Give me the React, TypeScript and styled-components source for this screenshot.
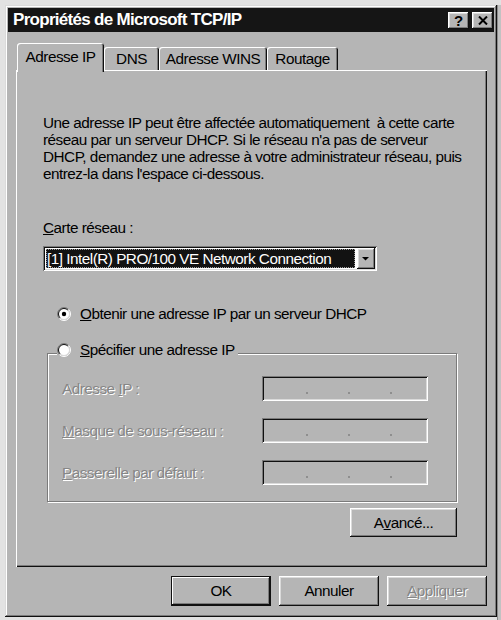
import React from 'react';
import styled, { createGlobalStyle, css } from 'styled-components';

const FACE = '#b5b5b5';
const SHADOW = '#7b7b7b';
const DARK = '#101010';
const LIGHT = '#ffffff';
const HILITE = '#dadada';
const FONT = `"Liberation Sans", Arial, sans-serif`;

const Global = createGlobalStyle`
  html, body { margin: 0; padding: 0; }
  body { background: #e2e2e2; font-family: ${FONT}; }
  * { box-sizing: border-box; }
`;

const uiFont = css`
  font-size: 15.3px;
  letter-spacing: -0.5px;
`;

const raised = css`
  box-shadow: inset -1px -1px 0 ${DARK}, inset 1px 1px 0 ${LIGHT},
    inset -2px -2px 0 ${SHADOW}, inset 2px 2px 0 ${HILITE};
`;

const sunken = css`
  box-shadow: inset 1px 1px 0 ${SHADOW}, inset -1px -1px 0 ${LIGHT},
    inset 2px 2px 0 ${DARK}, inset -2px -2px 0 ${HILITE};
`;

const Page = styled.div`
  width: 501px;
  height: 620px;
  display: flex;
  padding: 5px 0 0 5px;
  overflow: hidden;
`;

const Window = styled.div`
  width: 492px;
  height: 612px;
  flex: none;
  background: ${FACE};
  padding: 3px;
  display: flex;
  flex-direction: column;
  box-shadow: inset -1px -1px 0 ${DARK}, inset 1px 1px 0 ${HILITE},
    inset -2px -2px 0 ${SHADOW}, inset 2px 2px 0 ${LIGHT};
`;

const Backdrop = styled.div`
  flex: 1;
  background: #c2c2c2;
  border-left: 1px solid #8a8a8a;
`;

const TitleBar = styled.div`
  height: 24px;
  flex: none;
  background: #151515;
  display: flex;
  align-items: center;
  padding: 0 1px 0 5px;
`;

const TitleText = styled.div`
  flex: 1;
  color: #fff;
  font-weight: bold;
  font-size: 17px;
  letter-spacing: -0.7px;
  white-space: nowrap;
`;

const TitleButton = styled.div<{ $gap?: number }>`
  width: 21px;
  height: 17px;
  background: ${FACE};
  margin-left: ${(p) => p.$gap ?? 0}px;
  display: flex;
  align-items: center;
  justify-content: center;
  color: #000;
  font-weight: bold;
  font-size: 15px;
  line-height: 1;
  ${raised}
`;

const Body = styled.div`
  flex: 1;
  display: flex;
  flex-direction: column;
  padding: 11px 7px 0 8px;
`;

const TabStrip = styled.div`
  display: flex;
  align-items: flex-end;
  height: 29px;
  padding-left: 1px;
  margin-bottom: -2px;
  position: relative;
  z-index: 1;
`;

const Tab = styled.div<{ $w: number; $active?: boolean }>`
  width: ${(p) => p.$w}px;
  height: ${(p) => (p.$active ? 29 : 23)}px;
  margin-bottom: ${(p) => (p.$active ? 0 : 2)}px;
  padding-bottom: ${(p) => (p.$active ? 2 : 0)}px;
  background: ${FACE};
  border-radius: 3px 3px 0 0;
  display: flex;
  align-items: center;
  justify-content: center;
  ${uiFont}
  color: #000;
  white-space: nowrap;
  box-shadow: inset 1px 1px 0 ${LIGHT}, inset -1px 0 0 ${DARK},
    inset -2px 0 0 ${SHADOW};
`;

const Panel = styled.div`
  height: 497px;
  flex: none;
  background: ${FACE};
  padding: 44px 0 0 27px;
  display: flex;
  flex-direction: column;
  box-shadow: inset 1px 1px 0 ${LIGHT}, inset -1px -1px 0 ${DARK},
    inset -2px -2px 0 ${SHADOW};
`;

const Text = styled.p`
  margin: 0;
  ${uiFont}
  line-height: 17px;
  color: #000;
  white-space: nowrap;
`;

const Label = styled.div<{ $top?: number }>`
  margin-top: ${(p) => p.$top ?? 0}px;
  ${uiFont}
  line-height: 17px;
  color: #000;
  white-space: nowrap;
`;

const Combo = styled.div`
  width: 334px;
  height: 25px;
  margin-top: 10px;
  background: #fff;
  padding: 2px;
  display: flex;
  ${sunken}
`;

const ComboValue = styled.div`
  flex: 1;
  padding: 1px 2px 1px 1px;
  display: flex;
`;

const Highlight = styled.div`
  flex: 1;
  background: #121212;
  color: #fff;
  ${uiFont}
  line-height: 17px;
  padding: 1px 0 0 1px;
  white-space: nowrap;
  outline: 1px dotted #9a9a9a;
  outline-offset: -1px;
`;

const DropButton = styled.div`
  width: 18px;
  background: ${FACE};
  display: flex;
  align-items: center;
  justify-content: center;
  ${raised}
`;

const Section = styled.div`
  margin-left: 4px;
  width: 410px;
  display: flex;
  flex-direction: column;
`;

const RadioRow = styled.div<{ $top?: number; $indent?: number }>`
  margin-top: ${(p) => p.$top ?? 0}px;
  padding-left: ${(p) => p.$indent ?? 0}px;
  height: 17px;
  display: flex;
  align-items: center;
  gap: 9px;
  ${uiFont}
  color: #000;
  white-space: nowrap;
`;

const GroupBox = styled.div`
  margin-top: 31px;
  border: 1px solid ${SHADOW};
  box-shadow: 1px 1px 0 ${LIGHT}, inset 1px 1px 0 ${LIGHT};
  padding: 0 0 16px 0;
  display: flex;
  flex-direction: column;
`;

const Legend = styled.div`
  align-self: flex-start;
  margin: -13px 0 0 9px;
  padding-right: 3px;
  height: 17px;
  background: ${FACE};
  display: flex;
  align-items: center;
  gap: 9px;
  ${uiFont}
  color: #000;
  white-space: nowrap;
`;

const FieldGrid = styled.div`
  margin: 18px 0 0 14px;
  display: grid;
  grid-template-columns: 200px 166px;
  grid-auto-rows: 25px;
  row-gap: 17px;
  align-items: center;
`;

const Disabled = styled.span`
  ${uiFont}
  color: #868686;
  text-shadow: 1px 1px 0 #fff;
  white-space: nowrap;
`;

const IpField = styled.div`
  height: 25px;
  background: ${FACE};
  display: flex;
  align-items: flex-end;
  justify-content: center;
  gap: 40px;
  padding: 0 0 7px 8px;
  ${sunken}
`;

const Dot = styled.span`
  width: 2px;
  height: 2px;
  background: #8e8e8e;
`;

const Button = styled.div<{ $w: number; $h?: number; $default?: boolean; $disabled?: boolean }>`
  width: ${(p) => p.$w}px;
  height: ${(p) => p.$h ?? 30}px;
  background: ${FACE};
  display: flex;
  align-items: center;
  justify-content: center;
  ${uiFont}
  color: ${(p) => (p.$disabled ? '#868686' : '#000')};
  text-shadow: ${(p) => (p.$disabled ? '1px 1px 0 #fff' : 'none')};
  white-space: nowrap;
  ${(p) =>
    p.$default
      ? css`
          box-shadow: inset 0 0 0 1px ${DARK}, inset -2px -2px 0 ${DARK},
            inset 2px 2px 0 ${LIGHT}, inset -3px -3px 0 ${SHADOW};
        `
      : raised}
`;

const AdvancedRow = styled.div`
  margin-top: 6px;
  align-self: flex-end;
`;

const ButtonRow = styled.div`
  margin-top: 9px;
  display: flex;
  justify-content: flex-end;
  gap: 8px;
`;

function Radio({ checked }: { checked?: boolean }) {
  return (
    <svg width="14" height="14" viewBox="0 0 14 14" style={{ flex: 'none' }}>
      <circle cx="7" cy="7" r="5.5" fill="#fff" />
      <path d="M2.4 11.6 A6.5 6.5 0 0 1 11.6 2.4" stroke={SHADOW} strokeWidth="1" fill="none" />
      <path d="M11.6 2.4 A6.5 6.5 0 0 1 2.4 11.6" stroke="#fff" strokeWidth="1" fill="none" />
      <path d="M3.11 10.89 A5.5 5.5 0 0 1 10.89 3.11" stroke={DARK} strokeWidth="1" fill="none" />
      <path d="M10.89 3.11 A5.5 5.5 0 0 1 3.11 10.89" stroke={HILITE} strokeWidth="1" fill="none" />
      {checked && <circle cx="7" cy="7" r="2.2" fill="#000" />}
    </svg>
  );
}

export default function App() {
  return (
    <>
      <Global />
      <Page>
        <Window>
          <TitleBar>
            <TitleText>Propriétés de Microsoft TCP/IP</TitleText>
            <TitleButton>?</TitleButton>
            <TitleButton $gap={3}>
              <svg width="10" height="9" viewBox="0 0 10 9">
                <path d="M1 0.5 L9 8.5 M9 0.5 L1 8.5" stroke="#000" strokeWidth="2" />
              </svg>
            </TitleButton>
          </TitleBar>
          <Body>
            <TabStrip>
              <Tab $w={87} $active>Adresse IP</Tab>
              <Tab $w={55}>DNS</Tab>
              <Tab $w={108}>Adresse WINS</Tab>
              <Tab $w={71}>Routage</Tab>
            </TabStrip>
            <Panel>
              <Text>
                Une adresse IP peut être affectée automatiquement{'\u00a0'} à cette carte
                <br />
                réseau par un serveur DHCP. Si le réseau n'a pas de serveur
                <br />
                DHCP, demandez une adresse à votre administrateur réseau, puis
                <br />
                entrez-la dans l'espace ci-dessous.
              </Text>
              <Label $top={37}>
                <u>C</u>arte réseau :
              </Label>
              <Combo>
                <ComboValue>
                  <Highlight>[1] Intel(R) PRO/100 VE Network Connection</Highlight>
                </ComboValue>
                <DropButton>
                  <svg width="8" height="4" viewBox="0 0 8 4">
                    <path d="M0 0 H7 L3.5 3.5 Z" fill="#000" />
                  </svg>
                </DropButton>
              </Combo>
              <Section>
                <RadioRow $top={34} $indent={10}>
                  <Radio checked />
                  <span>
                    <u>O</u>btenir une adresse IP par un serveur DHCP
                  </span>
                </RadioRow>
                <GroupBox>
                  <Legend>
                    <Radio />
                    <span>
                      <u>S</u>pécifier une adresse IP
                    </span>
                  </Legend>
                  <FieldGrid>
                    <Disabled>
                      Adresse <u>I</u>P :
                    </Disabled>
                    <IpField>
                      <Dot />
                      <Dot />
                      <Dot />
                    </IpField>
                    <Disabled>
                      <u>M</u>asque de sous-réseau :
                    </Disabled>
                    <IpField>
                      <Dot />
                      <Dot />
                      <Dot />
                    </IpField>
                    <Disabled>
                      <u>P</u>asserelle par défaut :
                    </Disabled>
                    <IpField>
                      <Dot />
                      <Dot />
                      <Dot />
                    </IpField>
                  </FieldGrid>
                </GroupBox>
                <AdvancedRow>
                  <Button $w={107} $h={29}>
                    A<u>v</u>ancé...
                  </Button>
                </AdvancedRow>
              </Section>
            </Panel>
            <ButtonRow>
              <Button $w={100} $default>
                OK
              </Button>
              <Button $w={100}>Annuler</Button>
              <Button $w={100} $disabled>
                <u>A</u>ppliquer
              </Button>
            </ButtonRow>
          </Body>
        </Window>
        <Backdrop />
      </Page>
    </>
  );
}
